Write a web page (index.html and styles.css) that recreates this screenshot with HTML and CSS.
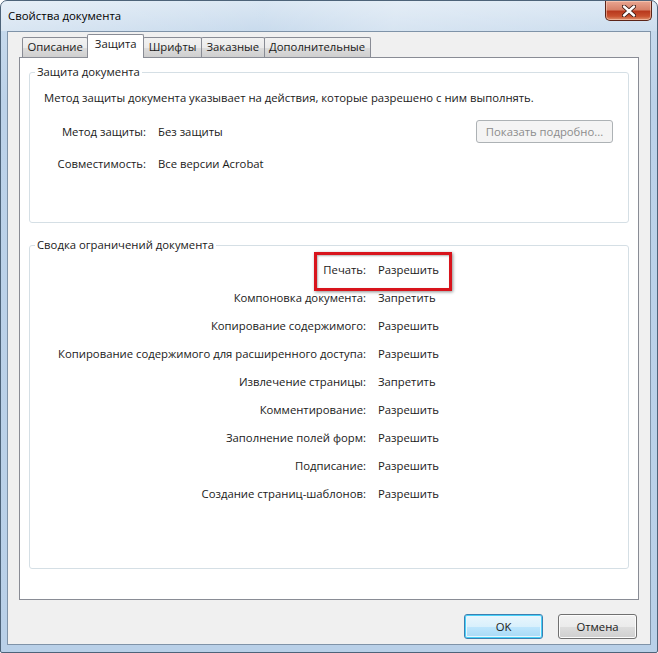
FILE: index.html
```html
<!DOCTYPE html>
<html lang="ru">
<head>
<meta charset="utf-8">
<title>Свойства документа</title>
<link rel="stylesheet" href="styles.css">
</head>
<body>
<div class="window">
  <div class="titlebar">
    <span class="title">Свойства документа</span>
    <div class="close">
      <svg width="14" height="12" viewBox="0 0 14 12"><path d="M2 1.5 L12 10.5 M12 1.5 L2 10.5" stroke="#3a1a14" stroke-width="4.2" stroke-linecap="round"/><path d="M2 1.5 L12 10.5 M12 1.5 L2 10.5" stroke="#ffffff" stroke-width="2.4" stroke-linecap="round"/></svg>
    </div>
  </div>
  <div class="client">
    <div class="tabs">
      <div class="tab">Описание</div>
      <div class="tab active">Защита</div>
      <div class="tab">Шрифты</div>
      <div class="tab">Заказные</div>
      <div class="tab">Дополнительные</div>
    </div>
    <div class="panel">
      <fieldset class="group g1">
        <legend>Защита документа</legend>
        <p class="desc">Метод защиты документа указывает на действия, которые разрешено с ним выполнять.</p>
        <div class="props">
          <span class="lbl">Метод защиты:</span>
          <span class="val">Без защиты</span>
          <button class="btn" disabled>Показать подробно...</button>
          <span class="lbl">Совместимость:</span>
          <span class="val">Все версии Acrobat</span>
        </div>
      </fieldset>
      <fieldset class="group g2">
        <legend>Сводка ограничений документа</legend>
        <div class="summary">
          <div class="row marked"><span class="lbl">Печать:</span><span class="val">Разрешить</span></div>
          <div class="row"><span class="lbl">Компоновка документа:</span><span class="val">Запретить</span></div>
          <div class="row"><span class="lbl">Копирование содержимого:</span><span class="val">Разрешить</span></div>
          <div class="row"><span class="lbl">Копирование содержимого для расширенного доступа:</span><span class="val">Разрешить</span></div>
          <div class="row"><span class="lbl">Извлечение страницы:</span><span class="val">Запретить</span></div>
          <div class="row"><span class="lbl">Комментирование:</span><span class="val">Разрешить</span></div>
          <div class="row"><span class="lbl">Заполнение полей форм:</span><span class="val">Разрешить</span></div>
          <div class="row"><span class="lbl">Подписание:</span><span class="val">Разрешить</span></div>
          <div class="row"><span class="lbl">Создание страниц-шаблонов:</span><span class="val">Разрешить</span></div>
        </div>
      </fieldset>
    </div>
    <div class="footer">
      <button class="btn default">OK</button>
      <button class="btn">Отмена</button>
    </div>
  </div>
</div>
</body>
</html>
```
FILE: styles.css
```css
* { box-sizing: border-box; }
html, body { margin: 0; padding: 0; }
body {
  width: 658px;
  height: 653px;
  background: #ffffff;
  font-family: "Open Sans", "Noto Sans", sans-serif;
  font-size: 11.3px;
  color: #1a1a1a;
}
.window {
  width: 658px;
  height: 653px;
  display: flex;
  flex-direction: column;
  border: 1px solid #4d6379;
  border-radius: 7px 7px 2px 2px;
  background: linear-gradient(to bottom, #d9e6f3 0px, #c6d9ec 30px, #bcd2e9 100px, #b9d0e8 100%);
  overflow: hidden;
}
.titlebar {
  height: 30px;
  flex: none;
  display: flex;
  align-items: flex-start;
  justify-content: space-between;
  background: linear-gradient(100deg, rgba(255,255,255,0.35) 0%, rgba(255,255,255,0.05) 40%, rgba(255,255,255,0.3) 60%, rgba(255,255,255,0.1) 100%);
}
.title {
  margin: 7px 0 0 7px;
  font-size: 11.4px;
  line-height: 16px;
  color: #000;
}
.close {
  width: 47px;
  height: 20px;
  margin-right: 5px;
  border: 1px solid #5b2418;
  border-top: none;
  border-radius: 0 0 5px 5px;
  background: linear-gradient(to bottom, #e9a692 0%, #d7826a 45%, #b93a1e 55%, #c8502e 80%, #e0926e 100%);
  box-shadow: inset 0 0 0 1px rgba(255,220,200,0.5);
  display: flex;
  align-items: center;
  justify-content: center;
}
.client {
  flex: 1;
  margin: 0 6px 7px 6px;
  border: 1px solid #7f93a8;
  background: #f0f0f0;
  display: flex;
  flex-direction: column;
  padding: 2px 11px 0 11px;
}
.tabs {
  display: flex;
  align-items: flex-end;
  height: 23px;
  padding-left: 3px;
  position: relative;
  z-index: 1;
}
.tab {
  height: 20px;
  padding: 0 4.5px;
  margin-right: -1px;
  border: 1px solid #898c95;
  border-bottom: none;
  border-radius: 2px 2px 0 0;
  background: linear-gradient(to bottom, #f2f2f2 0%, #ebebeb 50%, #dddddd 51%, #cfcfcf 100%);
  line-height: 18px;
  white-space: nowrap;
}
.tab.active {
  height: 24px;
  margin-bottom: -1px;
  padding: 0 6.5px;
  background: #ffffff;
  line-height: 18px;
  position: relative;
  z-index: 2;
}
.panel {
  width: 620px;
  height: 543px;
  background: #ffffff;
  border: 1px solid #898c95;
  padding: 0 9px;
  display: flex;
  flex-direction: column;
}
.group {
  margin: 0;
  padding: 0 15px 0 0;
  border: 1px solid #d5dfe5;
  border-radius: 3px;
  min-width: 0;
}
.group legend {
  margin-left: 5px;
  padding: 0 2px;
  line-height: 16px;
}
.g1 {
  margin-top: 6px;
  height: 159px;
}
.desc {
  margin: 10px 0 0 14px;
  line-height: 16px;
}
.props {
  margin-top: 13px;
  display: grid;
  grid-template-columns: 116px 1fr 137px;
  grid-auto-rows: 24px;
  column-gap: 12px;
  row-gap: 8px;
  align-items: center;
}
.lbl { text-align: right; white-space: nowrap; }
.val { white-space: nowrap; }
.props .btn { height: 23px; }
.g2 {
  margin-top: 14px;
  margin-bottom: 30px;
  flex: 1;
}
.summary {
  margin-top: 2px;
  display: flex;
  flex-direction: column;
}
.row {
  height: 28px;
  display: grid;
  grid-template-columns: 336px auto;
  column-gap: 12px;
  align-items: center;
  position: relative;
}
.row.marked::after {
  content: "";
  position: absolute;
  left: 284px;
  top: -3px;
  width: 132px;
  height: 33px;
  border: 3px solid #d8141c;
  box-shadow: 1px 1px 3px rgba(0,0,0,0.45), inset 1px 1px 2px rgba(0,0,0,0.3);
}
.footer {
  display: flex;
  justify-content: flex-end;
  gap: 15px;
  padding-top: 14px;
  padding-right: 2px;
}
.btn {
  font-family: inherit;
  font-size: 11.3px;
  color: #1a1a1a;
  height: 25px;
  width: 79px;
  padding: 0;
  border: 1px solid #707070;
  border-radius: 3px;
  background: linear-gradient(to bottom, #f2f2f2 0%, #ebebeb 50%, #dddddd 51%, #cfcfcf 100%);
  box-shadow: inset 0 0 0 1px #fcfcfc;
}
.btn.default {
  border-color: #3c7fb1;
  box-shadow: inset 0 0 0 1px #48d1f9, inset 0 0 0 2px #e9f6fd;
  background: linear-gradient(to bottom, #eaf6fd 0%, #d9f0fc 50%, #bee6fd 51%, #a7d9f5 100%);
}
.btn:disabled {
  width: 137px;
  color: #8c8c8c;
  border-color: #adb2b5;
  background: #f4f4f4;
  box-shadow: none;
}
```
